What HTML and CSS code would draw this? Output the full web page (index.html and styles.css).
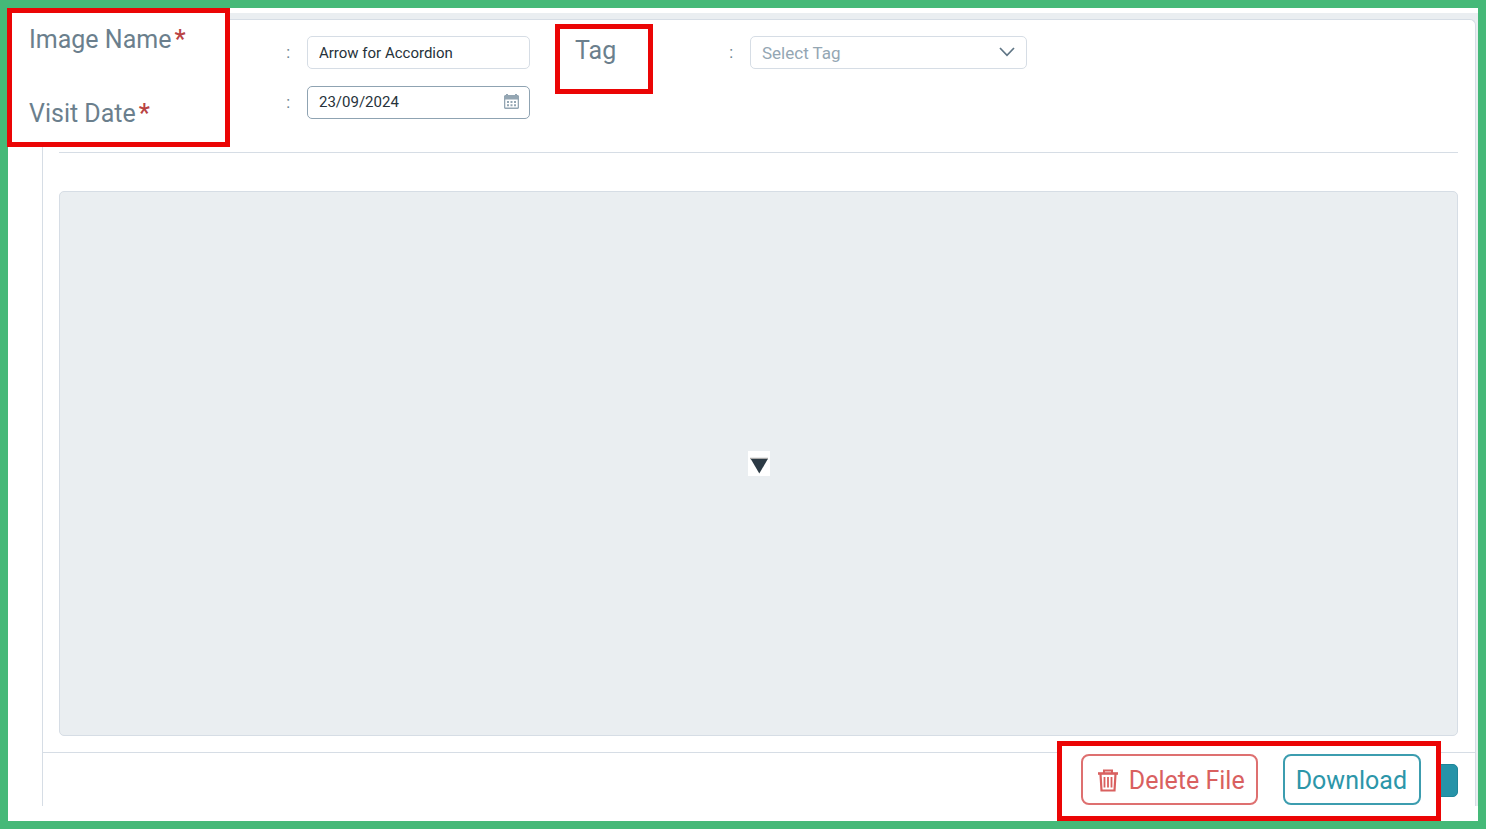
FILE: index.html
```html
<!DOCTYPE html>
<html lang="en">
<head>
    <meta charset="UTF-8">
    <meta name="viewport" content="width=device-width, initial-scale=1.0">
    <title>Edit Image</title>
    <link rel="stylesheet" href="styles.css">
</head>
<body>
<div class="frame">
    <div class="workspace">
        <form class="card">
            <div class="fields">
                <span class="colon">:</span>
                <input class="control" id="imageName" type="text" value="Arrow for Accordion">
                <span class="colon">:</span>
                <div class="select-wrap">
                    <select class="control select" id="tag">
                        <option>Select Tag</option>
                    </select>
                    <svg class="chevron" width="16" height="10" viewBox="0 0 16 10">
                        <path d="M1 1L8 8.3L15 1" fill="none" stroke="#5f7585" stroke-width="1.7"/>
                    </svg>
                </div>

                <span class="colon">:</span>
                <div class="date-wrap">
                    <input class="control date" id="visitDate" type="text" value="23/09/2024">
                    <svg class="calendar" width="15" height="15" viewBox="0 0 15 15">
                        <path fill="#94a6b3" fill-rule="evenodd" d="M2 0h2v1h7V0h2v1h1l1 1v12l-1 1H1l-1-1V2l1-1h1zM1.300 5.500v8h12.400v-8z"/>
                        <path fill="#94a6b3" d="M3 7h2v2H3zM6.500 7h2v2h-2zM10 7h2v2h-2zM3 10.300h2v2H3zM6.500 10.300h2v2h-2zM10 10.300h2v2h-2z"/>
                    </svg>
                </div>
            </div>

            <div class="preview">
                <svg width="22" height="25" viewBox="0 0 22 25">
                    <rect width="22" height="25" fill="#fff"/>
                    <path d="M2 7.500h18" stroke="#aaa9a8" stroke-width="1.500"/>
                    <path d="M2.800 8h17L11.300 22.500z" fill="#2c3a45"/>
                </svg>
            </div>

            <div class="card-footer">
                <button class="save-btn" type="button" aria-label="Save"></button>
            </div>
        </form>
    </div>

    <!-- highlighted areas -->
    <div class="callout callout-labels">
        <label class="field-label" for="imageName">Image Name <span class="required">*</span></label>
        <label class="field-label" for="visitDate">Visit Date <span class="required">*</span></label>
    </div>

    <div class="callout callout-tag">
        <label for="tag">Tag</label>
    </div>

    <div class="callout callout-actions">
        <button class="btn btn-delete" type="button">
            <svg width="22" height="24" viewBox="0 0 22 24" fill="none" stroke="#d9605f">
                <path d="M1 4.500h20" stroke-width="2.600"/>
                <path d="M7 4V1.500h8V4" stroke-width="2"/>
                <path d="M3.500 5l1 16.500h13l1-16.500" stroke-width="2.200"/>
                <path d="M7.500 8v10.500M11 8v10.500M14.500 8v10.500" stroke-width="1.800"/>
            </svg>
            Delete File
        </button>
        <button class="btn btn-download" type="button">Download</button>
    </div>
</div>
</body>
</html>
```
FILE: styles.css
```css
* {
    box-sizing: border-box;
}

body {
    margin: 0;
    font-family: Roboto, "Liberation Sans", sans-serif;
    color: #6b7f8d;
}

.frame {
    position: relative;
    display: flex;
    flex-direction: column;
    min-height: 100vh;
    padding: 5px 0 15px 34px;
    border: 8px solid #45b978;
    background: #fff;
}

.workspace {
    flex: 1;
    display: flex;
    padding: 6px 2px 0 0;
    background: #eaeef1;
}

.card {
    flex: 1;
    display: flex;
    flex-direction: column;
    border: 1px solid #d6dde5;
    border-bottom: 0;
    border-radius: 6px 6px 0 0;
    background: #fff;
}

.fields {
    display: grid;
    grid-template-columns: 248px 223px 220px 277px;
    row-gap: 17px;
    margin: 0 17px 0 16px;
    padding: 16px 0 33px;
    border-bottom: 1px solid #d6dde5;
}

.colon {
    padding-right: 17px;
    font-size: 16px;
    line-height: 33px;
    text-align: right;
}

.control {
    display: block;
    width: 100%;
    height: 33px;
    padding: 0 11px;
    border: 1px solid #d6dde5;
    border-radius: 5px;
    background: #fff;
    color: #26323a;
    font-family: inherit;
    font-size: 15px;
}

.select-wrap,
.date-wrap {
    position: relative;
}

.select {
    appearance: none;
    color: #94a6b3;
    font-size: 17px;
}

.date {
    padding-bottom: 2px;
    border-color: #8fa3b2;
}

.chevron {
    position: absolute;
    top: 11px;
    right: 12px;
    pointer-events: none;
}

.calendar {
    position: absolute;
    top: 8px;
    right: 11px;
}

.preview {
    flex: 1;
    display: flex;
    align-items: center;
    justify-content: center;
    margin: 38px 17px 16px 16px;
    border: 1px solid #d6dde5;
    border-radius: 5px;
    background: #eaeef1;
}

.card-footer {
    display: flex;
    justify-content: flex-end;
    padding: 11px 17px 9px;
    border-top: 1px solid #d6dde5;
}

.save-btn {
    width: 80px;
    height: 33px;
    border: 1px solid #1f8599;
    border-radius: 5px;
    background: #2693a8;
}

.callout {
    position: absolute;
    border: 5px solid #eb0505;
    background: #fff;
    font-size: 25px;
    line-height: 30px;
}

.callout-labels {
    top: 0;
    left: -1px;
    display: flex;
    flex-direction: column;
    gap: 44px;
    width: 223px;
    padding: 12px 17px 13px;
}

.field-label {
    display: flex;
    gap: 3px;
}

.required {
    color: #b94343;
    font-weight: 500;
}

.callout-tag {
    top: 16px;
    left: 547px;
    width: 98px;
    padding: 7px 15px 23px;
}

.callout-actions {
    right: 37px;
    bottom: 0;
    display: flex;
    gap: 25px;
    padding: 8px 15px 11px 19px;
}

.btn {
    display: flex;
    align-items: center;
    gap: 10px;
    height: 51px;
    padding: 2px 12px 0 11px;
    border: 2px solid;
    border-radius: 8px;
    background: #fff;
    font-family: inherit;
    font-size: 25px;
}

.btn-delete {
    padding-right: 11px;
    padding-left: 14px;
    border-color: #de7070;
    color: #d9605f;
}

.btn-download {
    border-color: #3c9daf;
    color: #2c96a9;
}
```
